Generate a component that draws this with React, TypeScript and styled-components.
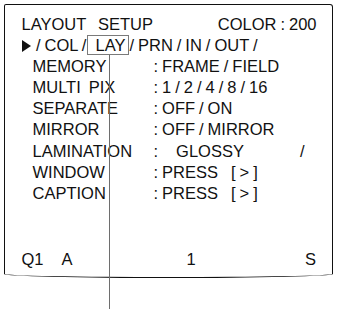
import React from "react";
import styled, { createGlobalStyle } from "styled-components";

const GlobalStyle = createGlobalStyle`
  html, body {
    margin: 0;
    padding: 0;
    background: #fff;
  }
  body {
    font-family: "Liberation Sans", Arial, sans-serif;
    color: #111;
    overflow: hidden;
  }
`;

const Page = styled.div`
  position: relative;
  width: 337px;
  height: 309px;
  overflow: hidden;
  padding-top: 4px;
  box-sizing: border-box;
`;

const Screen = styled.div`
  box-sizing: border-box;
  margin-left: 4px;
  width: 329px;
  height: 274px;
  border: 1.5px solid #111;
  border-radius: 2px 3px 50% 50% / 2px 3px 4px 4px;
  padding: 9px 15.5px 7px 16.5px;
  display: flex;
  flex-direction: column;
  font-size: 16.5px;
  line-height: 21.1px;
  word-spacing: -0.6px;
`;

const Header = styled.div`
  display: flex;
  justify-content: space-between;
  white-space: pre;
`;

const MenuRow = styled.div`
  display: flex;
  align-items: center;
  white-space: pre;
`;

const Pointer = styled.span`
  flex-shrink: 0;
  width: 0;
  height: 0;
  margin: 0 5px 0 0.5px;
  border-left: 9px solid #111;
  border-top: 6px solid transparent;
  border-bottom: 6px solid transparent;
`;

const Selected = styled.span`
  position: relative;
  margin-left: 9px;

  &::before {
    content: "";
    position: absolute;
    left: -8.5px;
    right: -4px;
    top: 0;
    height: 20px;
    border: 1.5px solid #7a7a7a;
    box-sizing: border-box;
  }

  &::after {
    content: "";
    position: absolute;
    left: 13.5px;
    top: 20px;
    width: 1.5px;
    height: 270px;
    background: #6e6e6e;
  }
`;

const ItemList = styled.div`
  display: flex;
  flex-direction: column;
  padding-left: 11px;
`;

const ItemRow = styled.div`
  display: grid;
  grid-template-columns: 121px 1fr;
  white-space: pre;
`;

const Label = styled.span``;

const Value = styled.span`
  white-space: pre;
`;

const Spacer = styled.span<{ $w: number }>`
  display: inline-block;
  width: ${(p) => p.$w}px;
`;

const Footer = styled.div`
  margin-top: auto;
  display: grid;
  grid-template-columns: 40px 125px auto 1fr auto;
  padding-right: 0.5px;
`;

type Item = { label: string; value: React.ReactNode };

const items: Item[] = [
  { label: "MEMORY", value: ": FRAME / FIELD" },
  { label: "MULTI  PIX", value: ": 1 / 2 / 4 / 8 / 16" },
  { label: "SEPARATE", value: ": OFF / ON" },
  { label: "MIRROR", value: ": OFF / MIRROR" },
  {
    label: "LAMINATION",
    value: (
      <>
        :<Spacer $w={18} />
        GLOSSY
        <Spacer $w={56} />/
      </>
    ),
  },
  {
    label: "WINDOW",
    value: (
      <>
        : PRESS<Spacer $w={13} />[ &gt; ]
      </>
    ),
  },
  {
    label: "CAPTION",
    value: (
      <>
        : PRESS<Spacer $w={13} />[ &gt; ]
      </>
    ),
  },
];

const App = () => {
  return (
    <Page>
      <GlobalStyle />
      <Screen>
        <Header>
          <span>LAYOUT   SETUP</span>
          <span>COLOR : 200</span>
        </Header>
        <MenuRow>
          <Pointer />
          / COL /<Selected>LAY</Selected> / PRN / IN / OUT /
        </MenuRow>
        <ItemList>
          {items.map((it) => (
            <ItemRow key={it.label}>
              <Label>{it.label}</Label>
              <Value>{it.value}</Value>
            </ItemRow>
          ))}
        </ItemList>
        <Footer>
          <span>Q1</span>
          <span>A</span>
          <span>1</span>
          <span />
          <span>S</span>
        </Footer>
      </Screen>
    </Page>
  );
};

export default App;
